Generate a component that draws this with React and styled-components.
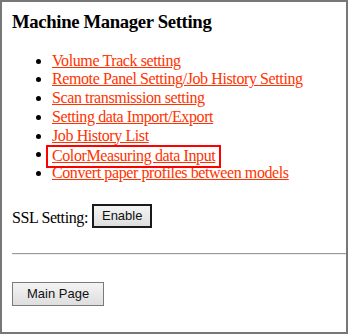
import React from "react";
import styled, { createGlobalStyle } from "styled-components";

const GlobalStyle = createGlobalStyle`
  html, body {
    margin: 0;
    padding: 0;
    background: #ffffff;
  }
  body {
    font-family: "Liberation Serif", "Times New Roman", serif;
    font-size: 16px;
    color: #000000;
  }
`;

const Frame = styled.div`
  box-sizing: border-box;
  width: 348px;
  height: 334px;
  border: 2px solid #777777;
  padding: 9px 0 0 10px;
  overflow: hidden;
`;

const Title = styled.h3`
  margin: 0 0 18.72px;
  font-size: 18.72px;
  font-weight: bold;
  letter-spacing: -0.35px;
`;

const LinkList = styled.ul`
  margin: 0;
  padding-left: 40px;
  line-height: 18.7px;
  list-style: disc;
  letter-spacing: -0.4px;
`;

const Item = styled.li`
  margin: 0;
`;

const Link = styled.a`
  color: #ff3300;
  text-decoration: underline;
  cursor: pointer;
`;

/* highlight box drawn over the link, kept out of the line height */
const Marked = styled.span`
  display: inline-block;
  position: relative;
  top: 2px;
  margin: -2px 0 -2px -6px;
  padding: 0 4px;
  border: 2px solid #ff0000;
  line-height: 18.4px;
  vertical-align: baseline;
`;

const SslRow = styled.div`
  margin-top: 21px;
  display: flex;
  align-items: flex-end;
  gap: 4px;
`;

const Label = styled.span`
  letter-spacing: -0.4px;
  line-height: 18.4px;
`;

const Button = styled.button`
  box-sizing: border-box;
  font-family: "Liberation Sans", Arial, sans-serif;
  font-size: 13px;
  color: #111111;
  background: linear-gradient(#f4f4f4, #dedede);
  border: ${(p) => (p.$primary ? "2px solid #1a1a1a" : "1px solid #7a7a7a")};
  padding: ${(p) => (p.$primary ? "2px 8px" : "3px 14px")};
  height: 24px;
  margin: 0;
  border-radius: 0;
`;

const Rule = styled.hr`
  margin: 25px 0 0;
  height: 0;
  border: 0;
  border-top: 1px solid #9a9a9a;
  border-bottom: 1px solid #eeeeee;
`;

const Footer = styled.div`
  margin-top: 27px;
`;

const links = [
  "Volume Track setting",
  "Remote Panel Setting/Job History Setting",
  "Scan transmission setting",
  "Setting data Import/Export",
  "Job History List",
  "ColorMeasuring data Input",
  "Convert paper profiles between models",
];

export default function App() {
  return (
    <>
      <GlobalStyle />
      <Frame>
        <Title>Machine Manager Setting</Title>
        <LinkList>
          {links.map((label) => (
            <Item key={label}>
              {label === "ColorMeasuring data Input" ? (
                <Marked>
                  <Link>{label}</Link>
                </Marked>
              ) : (
                <Link>{label}</Link>
              )}
            </Item>
          ))}
        </LinkList>
        <SslRow>
          <Label>SSL Setting:</Label>
          <Button $primary>Enable</Button>
        </SslRow>
        <Rule />
        <Footer>
          <Button>Main Page</Button>
        </Footer>
      </Frame>
    </>
  );
}
